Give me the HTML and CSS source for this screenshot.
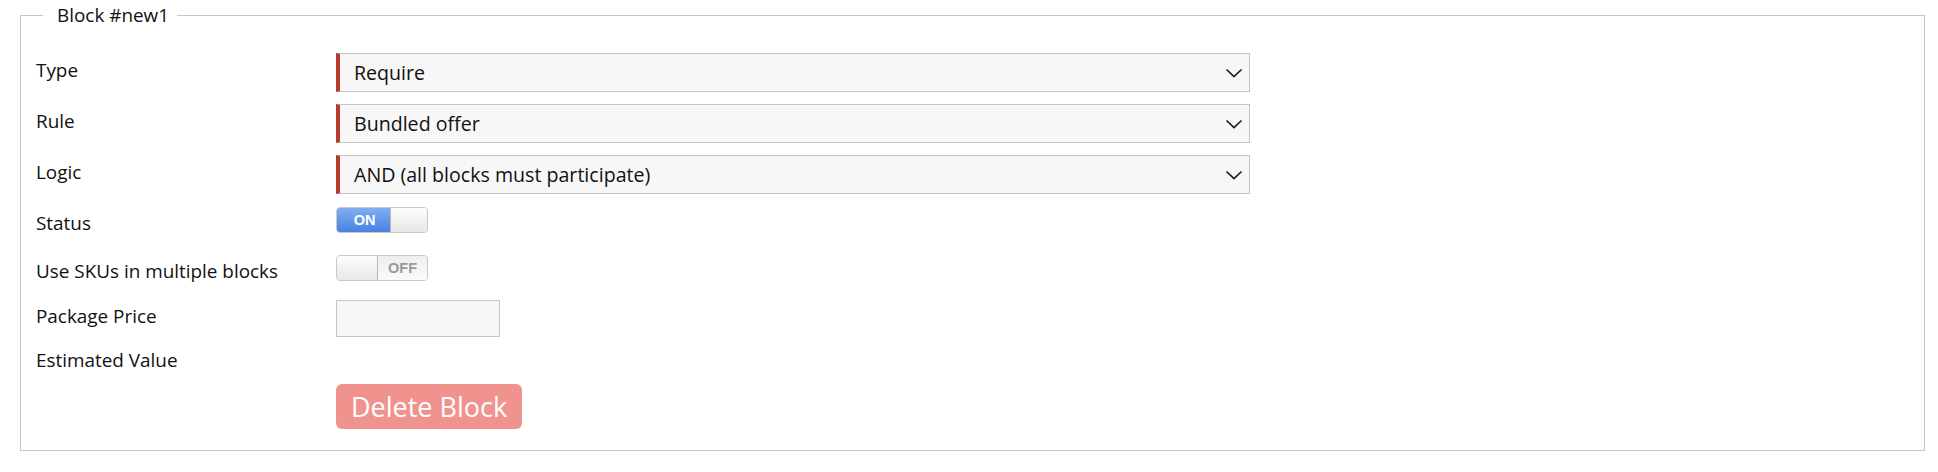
FILE: index.html
```html
<!DOCTYPE html>
<html lang="en">
<head>
<meta charset="utf-8">
<title>Block #new1</title>
<link rel="stylesheet" href="styles.css">
</head>
<body>
<div class="page">
  <fieldset class="block">
    <legend class="block__legend">Block #new1</legend>
    <div class="form">
      <div class="row row--select">
        <div class="row__label">Type</div>
        <div class="select">
          <span class="select__value">Require</span>
          <svg class="select__chevron" width="18" height="10" viewBox="0 0 18 10"><polyline points="1.5,1.5 9,8.5 16.5,1.5" fill="none" stroke="#1d1d1d" stroke-width="1.7"/></svg>
        </div>
      </div>
      <div class="row row--select">
        <div class="row__label">Rule</div>
        <div class="select">
          <span class="select__value">Bundled offer</span>
          <svg class="select__chevron" width="18" height="10" viewBox="0 0 18 10"><polyline points="1.5,1.5 9,8.5 16.5,1.5" fill="none" stroke="#1d1d1d" stroke-width="1.7"/></svg>
        </div>
      </div>
      <div class="row row--select row--last-select">
        <div class="row__label">Logic</div>
        <div class="select">
          <span class="select__value">AND (all blocks must participate)</span>
          <svg class="select__chevron" width="18" height="10" viewBox="0 0 18 10"><polyline points="1.5,1.5 9,8.5 16.5,1.5" fill="none" stroke="#1d1d1d" stroke-width="1.7"/></svg>
        </div>
      </div>
      <div class="row row--status">
        <div class="row__label">Status</div>
        <div class="toggle toggle--on">
          <span class="toggle__on">ON</span>
          <span class="toggle__knob"></span>
        </div>
      </div>
      <div class="row row--skus">
        <div class="row__label">Use SKUs in multiple blocks</div>
        <div class="toggle toggle--off">
          <span class="toggle__knob toggle__knob--left"></span>
          <span class="toggle__off">OFF</span>
        </div>
      </div>
      <div class="row row--price">
        <div class="row__label">Package Price</div>
        <div class="input"></div>
      </div>
      <div class="row row--estimated">
        <div class="row__label">Estimated Value</div>
      </div>
      <div class="row row--actions">
        <div class="row__label"></div>
        <button class="btn-delete" type="button">Delete Block</button>
      </div>
    </div>
  </fieldset>
</div>
</body>
</html>
```

FILE: styles.css
```css
* {
  box-sizing: border-box;
}

html, body {
  margin: 0;
  padding: 0;
  background: #ffffff;
}

body {
  font-family: "Open Sans", "Noto Sans", sans-serif;
  font-size: 18.9px;
  color: #111111;
}

.page {
  padding: 4px 13px 0 20px;
}

.block {
  margin: 0;
  border: 1px solid #c6c6c6;
  padding: 0 15px 21px 15px;
  min-width: 0;
}

.block__legend {
  margin-left: 7px;
  padding: 0 8px 0 14px;
  line-height: 22px;
  font-size: 18.9px;
  color: #111111;
}

.form {
  margin-top: 27px;
  display: flex;
  flex-direction: column;
}

.row {
  display: flex;
  align-items: flex-start;
}

.row__label {
  width: 300px;
  flex: 0 0 300px;
  padding-top: 4px;
  line-height: 24px;
  white-space: nowrap;
}

.row--select .row__label {
  padding-top: 5px;
}

.row--select {
  margin-bottom: 12px;
}

.row--last-select {
  margin-bottom: 13px;
}

.row--status {
  margin-bottom: 20px;
}

.row--skus {
  margin-bottom: 17px;
}

.row--price {
  margin-bottom: 7px;
}

.row--estimated {
  margin-bottom: 12px;
}

.select {
  width: 914px;
  height: 39px;
  display: flex;
  align-items: center;
  justify-content: space-between;
  background: #f7f7f7;
  border: 1px solid #c4c4c4;
  border-left: 4px solid #b73a2b;
  padding: 0 6px 0 14px;
}

.select__value {
  font-size: 19.6px;
  line-height: 24px;
  color: #111111;
}

.select__chevron {
  display: block;
}

.toggle {
  display: flex;
  width: 92px;
  height: 26px;
  border: 1px solid #c9c9c9;
  border-radius: 4px;
  overflow: hidden;
  font-family: "Liberation Sans", Arial, sans-serif;
  font-weight: bold;
  font-size: 14.5px;
}

.toggle__on {
  width: 53px;
  flex: 0 0 53px;
  display: flex;
  align-items: center;
  justify-content: center;
  padding-left: 2px;
  color: #ffffff;
  background: linear-gradient(#80aef0, #4782e2);
}

.toggle__knob {
  flex: 1 1 auto;
  background: linear-gradient(#fdfdfd, #e7e7e7);
  border-left: 1px solid #b9b9b9;
}

.toggle__knob--left {
  flex: 0 0 41px;
  border-left: none;
  border-right: 1px solid #b9b9b9;
}

.toggle__off {
  flex: 1 1 auto;
  display: flex;
  align-items: center;
  justify-content: center;
  color: #9a9a9a;
  background: linear-gradient(#eeeeee, #fbfbfb);
}

.input {
  width: 164px;
  height: 37px;
  background: #f7f7f7;
  border: 1px solid #c6c6c6;
}

.btn-delete {
  height: 45px;
  width: 186px;
  padding: 0 15px;
  border: none;
  border-radius: 6px;
  background: #f0938e;
  color: #ffffff;
  font-family: "Open Sans", "Noto Sans", sans-serif;
  font-size: 27px;
  font-weight: 500;
  line-height: 45px;
  text-align: left;
  white-space: nowrap;
  cursor: pointer;
}
```
